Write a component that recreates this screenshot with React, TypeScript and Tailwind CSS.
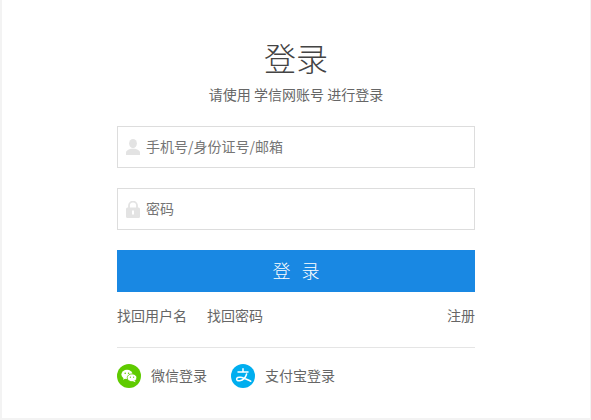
const fontStack = "font-['Noto_Sans_CJK_SC',sans-serif]";

const UserIcon = () => (
  <svg width="14" height="16" viewBox="0 0 14 16" className="shrink-0">
    <ellipse cx="7" cy="4.6" rx="3.9" ry="4.6" fill="#e3e3e3" />
    <path d="M0 16v-2.6c0-1.6 1.6-2.4 4.8-3.6h4.4c3.2 1.2 4.8 2 4.8 3.6V16z" fill="#e3e3e3" />
  </svg>
);

const LockIcon = () => (
  <svg width="14" height="17" viewBox="0 0 14 17" className="shrink-0">
    <path d="M3 7V4.6a4 4 0 0 1 8 0V7" fill="none" stroke="#e3e3e3" strokeWidth="1.8" />
    <rect x="0" y="6.5" width="14" height="10.5" rx="1.5" fill="#e3e3e3" />
    <rect x="6" y="9.5" width="2" height="4" fill="#ffffff" />
  </svg>
);

const WechatIcon = () => (
  <svg width="24" height="24" viewBox="0 0 24 24" className="shrink-0">
    <circle cx="12" cy="12" r="12" fill="#5fcb00" />
    <ellipse cx="10" cy="10.4" rx="5.6" ry="4.6" fill="#ffffff" />
    <path d="M6.8 13.6l-.8 2.2 2.6-1.3z" fill="#ffffff" />
    <ellipse cx="15" cy="13.8" rx="4.8" ry="3.9" fill="#ffffff" stroke="#5fcb00" strokeWidth="0.8" />
    <path d="M17.6 16.6l1.1 1.7-2.7-1.1z" fill="#ffffff" />
    <circle cx="8.2" cy="9.2" r="0.8" fill="#5fcb00" />
    <circle cx="11.6" cy="9.2" r="0.8" fill="#5fcb00" />
    <circle cx="13.4" cy="13.2" r="0.6" fill="#5fcb00" />
    <circle cx="16.6" cy="13.2" r="0.6" fill="#5fcb00" />
  </svg>
);

const AlipayIcon = () => (
  <svg width="24" height="24" viewBox="0 0 24 24" className="shrink-0">
    <circle cx="12" cy="12" r="12" fill="#00aeef" />
    <path
      d="M7 8h10M12 4.8V8M15.6 10c-.9 3.4-3.6 6.2-6.8 6.8-1.9.3-3.2-.4-3.2-1.7 0-1.4 1.7-2.2 3.8-1.9 3.2.4 7.4 2.6 10.4 4"
      fill="none"
      stroke="#ffffff"
      strokeWidth="1.5"
      strokeLinecap="round"
    />
  </svg>
);

export default function App() {
  return (
    <div className={`h-[420px] w-[591px] overflow-hidden bg-[#f3f3f3] pl-[2px] pr-px pb-[2px] ${fontStack}`}>
      <div className="flex h-full flex-col items-center bg-white">
        <h1 className="mt-[34px] h-[46px] text-[32px] leading-[46px] font-light text-[#444444]">登录</h1>
        <p className="mt-[2px] h-[26px] text-[14px] leading-[24px] text-[#666666]">请使用 学信网账号 进行登录</p>

        <form className="mt-[18px] flex w-[358px] flex-col">
          <div className="flex h-[42px] items-center gap-[6px] border border-[#dddddd] pl-[8px]">
            <UserIcon />
            <span className="pb-[2px] text-[14px] text-[#757575]">手机号/身份证号/邮箱</span>
          </div>
          <div className="mt-[20px] flex h-[42px] items-center gap-[6px] border border-[#dddddd] pl-[8px]">
            <LockIcon />
            <span className="pb-[2px] text-[14px] text-[#757575]">密码</span>
          </div>
          <button type="button" className="mt-[20px] h-[42px] bg-[#1988e3] pb-[2px] pl-[11px] text-[18px] font-light tracking-[11px] text-white">
            登录
          </button>

          <div className="mt-[14px] flex h-[20px] items-center pb-[2px] text-[14px] leading-[20px] text-[#666666]">
            <span>找回用户名</span>
            <span className="ml-[20px]">找回密码</span>
            <span className="ml-auto">注册</span>
          </div>

          <div className="mt-[21px] h-px bg-[#e5e5e5]" />

          <div className="mt-[16px] flex h-[24px] items-center text-[14px] text-[#666666]">
            <WechatIcon />
            <span className="ml-[10px] pb-[2px]">微信登录</span>
            <div className="ml-[24px] flex items-center">
              <AlipayIcon />
              <span className="ml-[10px] pb-[2px]">支付宝登录</span>
            </div>
          </div>
        </form>
      </div>
    </div>
  );
}
